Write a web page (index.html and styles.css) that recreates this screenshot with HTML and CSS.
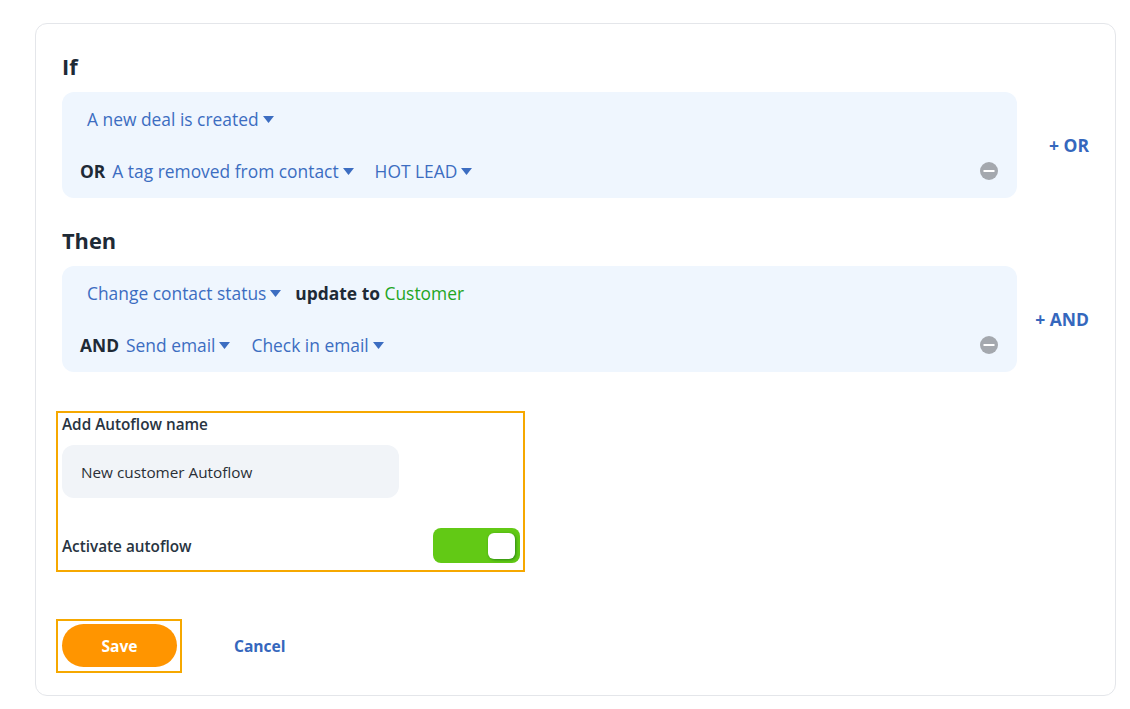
FILE: index.html
```html
<!DOCTYPE html>
<html>
<head>
<meta charset="utf-8">
<link rel="stylesheet" href="styles.css">
</head>
<body>
<div class="card">
  <h2 class="heading">If</h2>
  <div class="section">
    <div class="box">
      <div class="row">
        <span class="dd">A new deal is created<svg class="caret" viewBox="0 0 11 7"><polygon points="0,0 11,0 5.5,7"/></svg></span>
      </div>
      <div class="row">
        <span class="kw">OR</span>
        <span class="dd">A tag removed from contact<svg class="caret" viewBox="0 0 11 7"><polygon points="0,0 11,0 5.5,7"/></svg></span>
        <span class="dd">HOT LEAD<svg class="caret" viewBox="0 0 11 7"><polygon points="0,0 11,0 5.5,7"/></svg></span>
        <svg class="minus" viewBox="0 0 18 18"><circle cx="9" cy="9" r="9"/><line x1="3.5" y1="9" x2="14.5" y2="9"/></svg>
      </div>
    </div>
    <a class="side">+ OR</a>
  </div>

  <h2 class="heading then">Then</h2>
  <div class="section">
    <div class="box">
      <div class="row">
        <span class="dd">Change contact status<svg class="caret" viewBox="0 0 11 7"><polygon points="0,0 11,0 5.5,7"/></svg></span>
        <span class="kw">update to</span>&nbsp;<span class="green">Customer</span>
      </div>
      <div class="row">
        <span class="kw">AND</span>
        <span class="dd">Send email<svg class="caret" viewBox="0 0 11 7"><polygon points="0,0 11,0 5.5,7"/></svg></span>
        <span class="dd">Check in email<svg class="caret" viewBox="0 0 11 7"><polygon points="0,0 11,0 5.5,7"/></svg></span>
        <svg class="minus" viewBox="0 0 18 18"><circle cx="9" cy="9" r="9"/><line x1="3.5" y1="9" x2="14.5" y2="9"/></svg>
      </div>
    </div>
    <a class="side">+ AND</a>
  </div>

  <div class="highlight settings">
    <div class="label">Add Autoflow name</div>
    <div class="input">New customer Autoflow</div>
    <div class="toggle-row">
      <span class="label">Activate autoflow</span>
      <span class="toggle"><span class="knob"></span></span>
    </div>
  </div>

  <div class="actions">
    <div class="highlight save-wrap"><button class="save">Save</button></div>
    <a class="cancel">Cancel</a>
  </div>
</div>
</body>
</html>
```

FILE: styles.css
```css
* { box-sizing: border-box; }
html, body { margin: 0; padding: 0; background: #ffffff; }
body { font-family: "Open Sans", "Noto Sans", sans-serif; color: #1e2a36; }

.card {
  margin: 23px 0 0 35px;
  width: 1081px;
  height: 673px;
  border: 1px solid #e4e6ea;
  border-radius: 12px;
  padding: 29px 26px 0 26px;
}

.heading {
  margin: 0 0 12px 0;
  font-size: 21.8px;
  line-height: 27px;
  font-weight: 700;
  color: #1e2a36;
}
.heading.then { margin-top: 29px; margin-bottom: 12px; }

.section {
  display: grid;
  grid-template-columns: 1fr 72px;
  align-items: center;
}

.box {
  background: #eff6fe;
  border-radius: 12px;
  padding: 14px 18px;
  display: flex;
  flex-direction: column;
  gap: 26px;
}

.row {
  display: flex;
  align-items: center;
  height: 26px;
  font-size: 17.4px;
  line-height: 26px;
}

.kw { font-weight: 700; color: #1e2a36; }
.green { color: #1fa51f; }

.dd {
  color: #3c6dc1;
  padding: 0 7px;
  margin-right: 7px;
  display: inline-flex;
  align-items: center;
}
.caret {
  width: 11px;
  height: 7px;
  margin-left: 4px;
  fill: #3c6dc1;
  margin-top: 1px;
}

.minus {
  width: 18px;
  height: 18px;
  margin-left: auto;
  margin-right: 1px;
}
.minus circle { fill: #a4a8ae; }
.minus line { stroke: #ffffff; stroke-width: 2; }

.side {
  text-align: right;
  font-weight: 700;
  font-size: 17.5px;
  color: #3567bd;
}

.highlight { border: 2px solid #f6a800; }

.settings {
  margin: 39px 0 0 -6px;
  width: 469px;
  padding: 1px 3px 7px 4px;
}
.label {
  font-size: 15.3px;
  line-height: 20px;
  font-weight: 600;
  color: #283441;
}
.input {
  margin-top: 11px;
  width: 337px;
  height: 53px;
  border-radius: 12px;
  background: #f1f4f8;
  padding-left: 19px;
  display: flex;
  align-items: center;
  font-size: 15.3px;
  color: #2a2f36;
}
.toggle-row {
  margin-top: 30px;
  display: flex;
  align-items: center;
  justify-content: space-between;
}
.toggle {
  width: 87px;
  height: 35px;
  border-radius: 8px;
  background: #62c915;
  display: flex;
  align-items: center;
  justify-content: flex-end;
  padding-right: 5px;
}
.knob {
  width: 27px;
  height: 26px;
  border-radius: 6px;
  background: #ffffff;
  box-shadow: 1px 1px 3px rgba(20, 110, 20, 0.7);
}

.actions {
  margin: 47px 0 0 -6px;
  display: flex;
  align-items: center;
}
.save-wrap {
  width: 126px;
  height: 54px;
  padding: 3px 3px 4px 4px;
}
.save {
  width: 115px;
  height: 43px;
  border: none;
  border-radius: 22px;
  background: #ff9500;
  color: #ffffff;
  font-family: "Open Sans", "Noto Sans", sans-serif;
  font-weight: 700;
  font-size: 15.6px;
  padding: 0;
}
.cancel {
  margin-left: 52px;
  font-weight: 700;
  font-size: 15.6px;
  color: #3567bd;
}
```
